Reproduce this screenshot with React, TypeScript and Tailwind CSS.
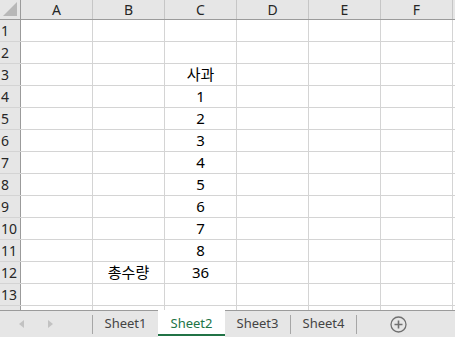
import React from 'react';

const COLS = ['A', 'B', 'C', 'D', 'E', 'F', 'G'];

// cell values keyed by row number
const DATA: { [row: number]: { [col: string]: string } } = {
  3: { C: '사과' },
  4: { C: '1' },
  5: { C: '2' },
  6: { C: '3' },
  7: { C: '4' },
  8: { C: '5' },
  9: { C: '6' },
  10: { C: '7' },
  11: { C: '8' },
  12: { B: '총수량', C: '36' },
};

const FONT = { fontFamily: '"Noto Sans", "Noto Sans CJK KR", sans-serif' };

const Tab = ({ label, active }: { label: string; active?: boolean }) => {
  if (active) {
    return (
      <div className="relative -mt-px flex h-[28px] w-[67px] shrink-0 items-center justify-center bg-white text-[13px] text-[#217346]">
        {label}
        <div className="absolute bottom-[2px] left-0 right-0 h-[2px] bg-[#217346]" />
      </div>
    );
  }
  return (
    <div className="flex h-full w-[65px] shrink-0 items-center justify-center text-[13px] text-[#444]">
      {label}
    </div>
  );
};

const Sep = () => <div className="my-auto h-[19px] w-px shrink-0 bg-[#a6a6a6]" />;

export default function App() {
  const rows = Array.from({ length: 14 }, (_, i) => i + 1);

  return (
    <div className="flex h-[337px] w-[455px] flex-col overflow-hidden bg-white" style={FONT}>
      <div className="flex-1 overflow-hidden">
        {/* column headers */}
        <div className="flex h-[20px] border-b border-[#9b9b9b] bg-[#e6e6e6]">
          <div className="relative h-full w-[21px] shrink-0 border-r border-[#9b9b9b]">
            <svg className="absolute left-[3px] top-[2px]" width="14" height="14" viewBox="0 0 14 14">
              <polygon points="14,0 14,14 0,14" fill="#b8b8b8" />
            </svg>
          </div>
          {COLS.map((c) => (
            <div
              key={c}
              className="flex h-full w-[72px] shrink-0 items-center justify-center border-r border-[#c6c6c6] text-[14px] leading-none text-[#262626]"
            >
              {c !== 'G' && c}
            </div>
          ))}
        </div>

        {rows.map((r) => (
          <div key={r} className="flex h-[22px] border-b border-[#d4d4d4]">
            <div className="flex h-full w-[21px] shrink-0 items-center border-r border-[#9b9b9b] bg-[#e6e6e6] pl-[1px] text-[14px] leading-none text-[#262626]">
              {r < 14 && r}
            </div>
            {COLS.map((c) => (
              <div
                key={c}
                className="flex h-full w-[72px] shrink-0 items-center justify-center border-r border-[#d4d4d4] text-[15px] leading-none text-black"
              >
                {DATA[r]?.[c]}
              </div>
            ))}
          </div>
        ))}
      </div>

      {/* sheet tab bar */}
      <div className="flex h-[27px] shrink-0 border-t border-[#9b9b9b] bg-[#e6e6e6]">
        <div className="flex w-[92px] shrink-0 items-center">
          <svg className="ml-[19px]" width="5" height="8" viewBox="0 0 5 8">
            <polygon points="5,0 5,8 0,4" fill="#c2c2c2" />
          </svg>
          <svg className="ml-[24px]" width="5" height="8" viewBox="0 0 5 8">
            <polygon points="0,0 0,8 5,4" fill="#c2c2c2" />
          </svg>
        </div>
        <Sep />
        <Tab label="Sheet1" />
        <Tab label="Sheet2" active />
        <Tab label="Sheet3" />
        <Sep />
        <Tab label="Sheet4" />
        <Sep />
        <div className="ml-[33px] flex items-center">
          <svg width="17" height="17" viewBox="0 0 17 17">
            <circle cx="8.5" cy="8.5" r="7.5" fill="none" stroke="#707070" strokeWidth="1.3" />
            <path d="M8.5 4.5v8M4.5 8.5h8" stroke="#707070" strokeWidth="1.6" />
          </svg>
        </div>
      </div>
    </div>
  );
}
